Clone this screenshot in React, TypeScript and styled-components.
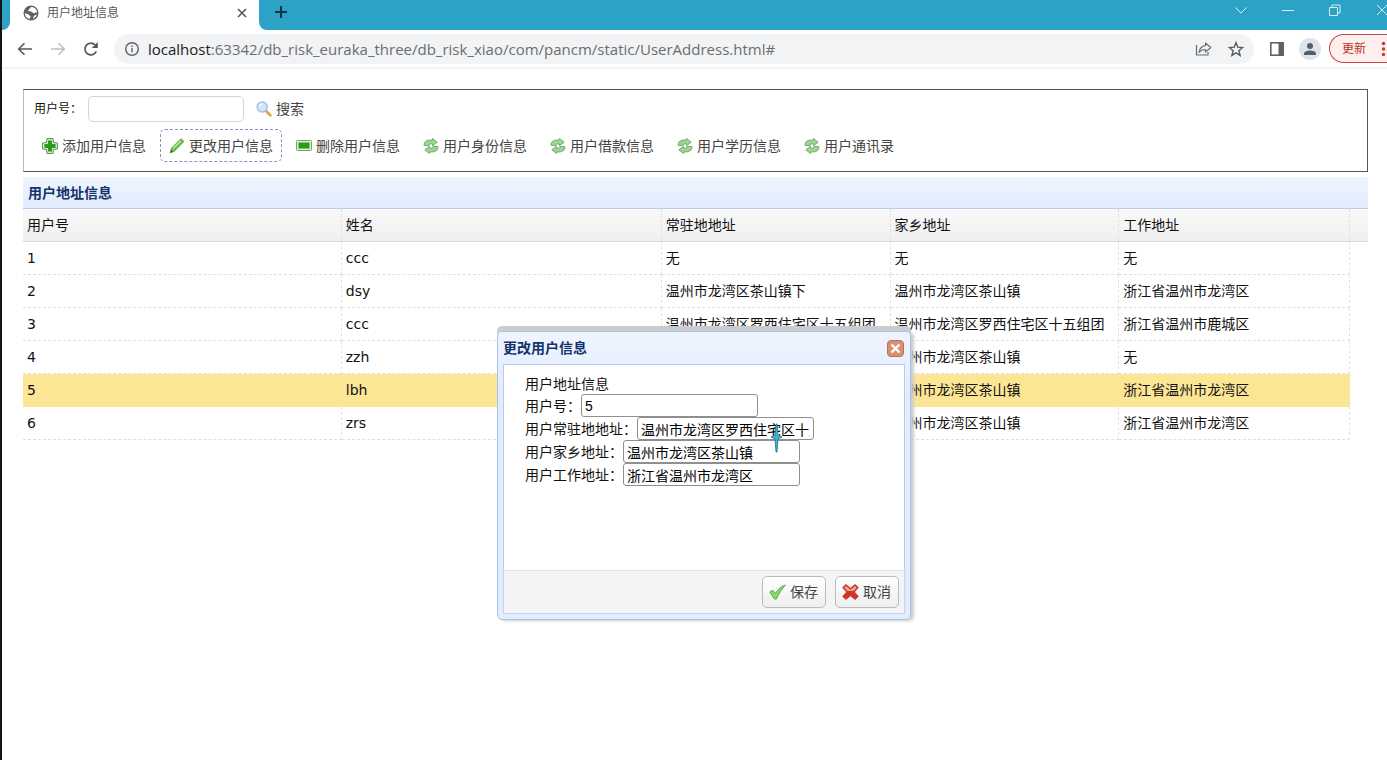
import React, { useState } from "react";
import styled, { createGlobalStyle } from "styled-components";

const CJK = '"Noto Sans CJK SC", sans-serif';
const UI = `"DejaVu Sans", ${CJK}`;
const CHROME = `"Open Sans", ${CJK}`;
const ARIAL = `"Liberation Sans", ${CJK}`;

const GlobalStyle = createGlobalStyle`
  * { box-sizing: border-box; }
  html, body { margin: 0; background: #fff; }
  body { overflow: hidden; font-family: ${UI}; font-size: 14px; line-height: 18px; color: #111; }
  button, input { font: inherit; margin: 0; }
  svg { display: block; flex: none; }
`;

const Shell = styled.div`
  min-height: 100vh;
  overflow: hidden;
  border-left: 2px solid #10151c;
`;

/* ---- browser frame ---- */

const TitleBar = styled.header`
  display: flex;
  height: 30px;
  padding-left: 8px;
  background: #2ca2c6;
`;

const Tab = styled.div`
  display: flex;
  align-items: center;
  width: 249px;
  height: 30px;
  padding: 0 9px 4px 13px;
  gap: 8px;
  background: #fff;
  font-family: ${CHROME};
  font-size: 12px;
  color: #55595e;
  box-shadow: -8px 8px 0 #fff, 8px 8px 0 #fff;
`;

const TabEdge = styled.div<{ $side: "left" | "right" }>`
  width: 8px;
  margin-left: ${(p) => (p.$side === "left" ? "-8px" : "0")};
  background: #2ca2c6;
  z-index: 1;
  border-radius: ${(p) => (p.$side === "left" ? "0 0 8px 0" : "0 0 0 8px")};
`;

const TabTitle = styled.span`
  flex: 1;
`;

const IconButton = styled.button<{ $w?: number }>`
  display: flex;
  align-items: center;
  justify-content: center;
  flex: none;
  width: ${(p) => p.$w ?? 16}px;
  height: 24px;
  padding: 0;
  border: 0;
  background: none;
  color: inherit;
`;

const NewTab = styled(IconButton)`
  margin-left: 6px;
  color: #10343f;
`;

const Caption = styled.div`
  display: flex;
  height: 20px;
  margin-left: auto;
  margin-right: -3px;
  gap: 31px;
  align-items: center;
  color: #d6eff7;
`;

const NavBar = styled.nav`
  position: relative;
  display: flex;
  align-items: center;
  height: 39px;
  padding-left: 15px;
  background: #fff;
  border-bottom: 2px solid #f3f4f5;
  color: #5a5e63;
`;

const NavButtons = styled.div`
  display: flex;
  gap: 17px;
  margin-right: 15px;
`;

const AddressBar = styled.div`
  display: flex;
  flex: 1;
  align-items: center;
  height: 30px;
  padding: 0 2px 0 10px;
  gap: 8px;
  border-radius: 15px;
  background: #f1f3f4;
  font-family: ${CHROME};
  font-size: 15px;
  color: #6a6e73;
`;

const Url = styled.span`
  flex: 1;
  white-space: nowrap;
  b {
    font-weight: 400;
    color: #202124;
  }
`;

const Actions = styled.div`
  display: flex;
  align-items: center;
  gap: 14px;
  margin-left: 15px;
`;

const Avatar = styled(IconButton)`
  width: 22px;
  height: 22px;
  border-radius: 50%;
  background: #dfe3ea;
  color: #545d6e;
`;

const Update = styled.button`
  display: flex;
  align-items: center;
  height: 29px;
  width: 58px;
  margin-left: 8px;
  padding: 0 0 0 12px;
  gap: 15px;
  border: 1px solid #c5483f;
  border-right: 0;
  border-radius: 15px 0 0 15px;
  background: #fcefee;
  font-family: ${CHROME};
  font-size: 12px;
  white-space: nowrap;
  color: #b8342b;
`;

/* ---- page ---- */

const Page = styled.main`
  padding: 20px 19px 0 21px;
`;

const ToolPanel = styled.section`
  display: flex;
  flex-direction: column;
  height: 83px;
  padding: 2px 9px 0;
  gap: 4px;
  border: 1px solid #555;
  border-left-color: #bbb;
  margin-bottom: 5px;
`;

const ToolRow = styled.div`
  display: flex;
  align-items: center;
  gap: 5px;
`;

const SearchLabel = styled.label`
  width: 50px;
  padding-left: 1px;
  font-size: 12px;
`;

const SearchInput = styled.input`
  width: 156px;
  height: 26px;
  padding: 0 4px;
  border: 1px solid #c9d6e8;
  border-radius: 5px;
  background: #fff;
  outline: none;
`;

const LinkButton = styled.button<{ $focused?: boolean }>`
  display: flex;
  align-items: center;
  gap: 4px;
  height: 33px;
  padding: 0 8px;
  border: 1px ${(p) => (p.$focused ? "dashed #8a8fc4" : "solid transparent")};
  border-radius: 5px;
  background: none;
  white-space: nowrap;
  color: #444;
`;

const SearchButton = styled(LinkButton)`
  padding: 0 6px;
`;

const GridTitle = styled.h2`
  height: 32px;
  margin: 0;
  padding: 0 5px;
  border-bottom: 1px solid #bccbe6;
  background: linear-gradient(#eff5ff, #e2ecff);
  font-size: 14px;
  line-height: 32px;
  color: #14336b;
`;

const Grid = styled.table`
  width: 100%;
  table-layout: fixed;
  border-collapse: separate;
  border-spacing: 0;
`;

const HeadRow = styled.tr`
  background: linear-gradient(#f9f9f9, #efefef);
`;

const Th = styled.th`
  height: 33px;
  padding: 0 4px;
  border-right: 1px dashed #e0e0e0;
  border-bottom: 1px solid #dcdcdc;
  font-weight: 400;
  text-align: left;
  white-space: nowrap;
  &:last-child {
    border-right: 0;
  }
`;

const Td = styled.td<{ $selected: boolean }>`
  height: 33px;
  padding: 0 4px;
  border-right: 1px dashed #e4e4e4;
  border-bottom: 1px dashed #e0e0e0;
  background: ${(p) => (p.$selected ? "#fde596" : "transparent")};
  ${(p) => p.$selected && "border-color: #fde596;"}
  white-space: nowrap;
`;

/* ---- dialog ---- */

const Dialog = styled.section`
  position: absolute;
  top: 331px;
  left: 497px;
  width: 414px;
  padding: 0 5px 5px;
  border: 1px solid #a9c1ea;
  border-radius: 5px;
  background: linear-gradient(#eff5ff, #e2ecff 20%);
  box-shadow: 0 -5px 0 #cbcccb, 3px 1px 3px #ccc;
`;

const DialogHead = styled.header`
  display: flex;
  align-items: center;
  justify-content: space-between;
  height: 32px;
  padding-right: 1px;
`;

const DialogTitle = styled.h3`
  margin: 0;
  font-size: 14px;
  color: #14336b;
`;

const CloseButton = styled.button`
  display: flex;
  align-items: center;
  justify-content: center;
  width: 17px;
  height: 17px;
  padding: 0;
  border: 1px solid #b9705a;
  border-radius: 4px;
  background: #d9906f;
`;

const DialogBody = styled.form`
  height: 206px;
  padding: 9px 21px;
  border: 1px solid #b9cbec;
  border-bottom: 0;
  background: #fff;
`;

const FormTitle = styled.div`
  height: 20px;
  line-height: 20px;
`;

const Field = styled.div`
  display: flex;
  align-items: center;
  height: 23px;
`;

const TextInput = styled.input`
  width: 177px;
  height: 23px;
  padding: 0 3px;
  border: 1px solid #8f8f8f;
  border-radius: 3px;
  background: #fff;
  font-family: ${ARIAL};
`;

const DialogFoot = styled.footer`
  display: flex;
  justify-content: flex-end;
  align-items: center;
  height: 44px;
  gap: 9px;
  padding: 0 5px;
  border: 1px solid #c5d3ec;
  border-top-color: #e3e3e3;
  background: #f4f4f4;
`;

const ActionButton = styled.button`
  display: flex;
  align-items: center;
  height: 32px;
  padding: 0 7px 0 6px;
  gap: 4px;
  border: 1px solid #bbb;
  border-radius: 5px;
  background: linear-gradient(#fff, #eee);
  color: #444;
`;

const Pointer = styled.svg`
  position: absolute;
  left: 770px;
  top: 423px;
  pointer-events: none;
`;

/* ---- icons ---- */

const GlobeIcon = () => (
  <svg width="16" height="16" viewBox="0 0 16 16">
    <circle cx="8" cy="8" r="7.5" fill="#5f6368" />
    <path d="M1.8 8.2 5 9.2c1.3.3 1.1 1.4 2 1.6.9.3.6 1.5.1 2L6.6 14C3.800 13.500 1.800 11 1.800 8.200Z M8.300 2 6.400 3.700c-.5.6 0 1-.9 1.400-.7.3-.3 1.200.4 1.200h1.500c1 0 1.200 1.100 2.200 1.100.8 0 1 .8 1.700.8.9 0 1.200-.4 1.600-.9l1.300.2C13.700 4.300 11.500 2 8.300 2Z M13.900 9.500c-.8 2-1.900 3.400-3.600 4.200l.2-1.800c.2-1 .9-1.400 1.600-1.600Z" fill="#fff" />
  </svg>
);

const BackIcon = ({ flip = false }: { flip?: boolean }) => (
  <svg width="16" height="16" viewBox="0 0 16 16" fill="none" stroke={flip ? "#bdc0c3" : "#55595e"} strokeWidth="1.6">
    {flip ? <path d="M1 8h13M8.500 2.200 14.300 8l-5.800 5.800" /> : <path d="M15 8H2M7.500 2.200 1.700 8l5.800 5.800" />}
  </svg>
);

const ReloadIcon = () => (
  <svg width="16" height="16" viewBox="0 0 16 16" fill="none">
    <path d="M13.300 10.300A5.900 5.900 0 1 1 12.300 4" stroke="#55595e" strokeWidth="1.7" />
    <path d="M14.800 1v6H8.800Z" fill="#55595e" />
  </svg>
);

const InfoIcon = () => (
  <svg width="16" height="16" viewBox="0 0 16 16" fill="none" stroke="#5f6368" strokeWidth="1.4">
    <circle cx="8" cy="8" r="6.300" />
    <path d="M8 7v4.200M8 4.500v1.500" />
  </svg>
);

const ShareIcon = () => (
  <svg width="17" height="16" viewBox="0 0 17 16" fill="none" stroke="#6a6e73" strokeWidth="1.200" strokeLinejoin="round">
    <path d="M1.500 4v10h11.500v-3" />
    <path d="M10.500 2 15.800 6.500 10.500 11V8.500C7.500 8.500 5.500 9.500 4 11.500 4.500 7.500 7 5 10.500 4.600Z" />
  </svg>
);

const StarIcon = () => (
  <svg width="16" height="16" viewBox="0 0 16 16" fill="none" stroke="#55595e" strokeWidth="1.400">
    <path d="m8 1.700 1.800 4.500 4.800.4-3.700 3.100 1.200 4.700L8 11.800l-4.100 2.600 1.200-4.700L1.400 6.600l4.800-.4Z" />
  </svg>
);

const PanelIcon = () => (
  <svg width="16" height="16" viewBox="0 0 16 16">
    <rect x="1.800" y="1.800" width="12.400" height="12.400" fill="#fff" stroke="#5f6368" strokeWidth="1.600" />
    <rect x="9.500" y="1" width="5.500" height="14" fill="#5f6368" />
  </svg>
);

const PersonIcon = () => (
  <svg width="14" height="14" viewBox="0 0 14 14" fill="currentColor">
    <circle cx="7" cy="4" r="3" />
    <path d="M1 13v-1.500C1 9.500 4.500 8.400 7 8.400s6 1.100 6 3.100V13Z" />
  </svg>
);

const DotsIcon = () => (
  <svg width="5" height="16" viewBox="0 0 5 16" fill="#c0392f">
    <circle cx="2.500" cy="2.500" r="1.700" />
    <circle cx="2.500" cy="8" r="1.700" />
    <circle cx="2.500" cy="13.500" r="1.700" />
  </svg>
);

const Lines = ({ d, size = 16, width = 1 }: { d: string; size?: number; width?: number }) => (
  <svg width={size} height={size} viewBox="0 0 16 16" fill="none" stroke="currentColor" strokeWidth={width}>
    <path d={d} />
  </svg>
);

const SearchIcon = () => (
  <svg width="16" height="16" viewBox="0 0 16 16">
    <path d="m10 10 4.300 4.300" stroke="#e2a256" strokeWidth="2.800" strokeLinecap="round" />
    <circle cx="6.200" cy="6" r="5" fill="#cfe5fb" stroke="#a3bfe6" strokeWidth="1.400" />
    <path d="M3.400 5.600A3 3 0 0 1 6.800 3" stroke="#fff" strokeWidth="1.200" fill="none" />
  </svg>
);

const AddIcon = () => (
  <svg width="16" height="16" viewBox="0 0 16 16">
    <path d="M5 .5h6L11.600 4.400 15.500 5v6l-3.900.6L11 15.500H5l-.6-3.900L.5 11V5l3.900-.6Z" fill="#cfe8ca" stroke="#5d9a57" strokeLinejoin="round" />
    <path d="M6 2.500h4V6h3.500v4H10v3.500H6V10H2.500V6H6Z" fill="#2d9a1c" />
  </svg>
);

const EditIcon = () => (
  <svg width="16" height="16" viewBox="0 0 16 16">
    <path d="m1.500 14.500 1-4.300L11.200 1.500c1.200-1 3.900 1 3 2.700L5.500 13Z" fill="#6fc24d" stroke="#4c9a36" strokeWidth=".9" />
    <path d="M4.200 10.300 12 2.700" stroke="#b9ea9f" strokeWidth="1.400" />
    <path d="m1.200 14.900.8-3 2.200 2.100Z" fill="#2c5c1e" />
  </svg>
);

const RemoveIcon = () => (
  <svg width="16" height="16" viewBox="0 0 16 16">
    <rect x=".5" y="2.500" width="15" height="10" rx="1" fill="#d9efd4" stroke="#6fae68" />
    <rect x="2.500" y="4.500" width="11" height="6" fill="#2d9a1c" />
  </svg>
);

const ReloadGreenIcon = () => (
  <svg width="16" height="16" viewBox="0 0 16 16" fill="#9bd68e" stroke="#5f9f60" strokeWidth=".8" strokeLinejoin="round">
    <path d="M1.200 7.500C.4 3.500 4 1.600 9.500 2V.4L14.200 4.200 9.500 7.800V6C7.400 5.700 6.200 6 6 7.500Z" />
    <path d="M14.800 8.500c.8 4-2.800 5.900-8.300 5.500v1.600L1.800 11.800 6.500 8.200V10c2.100.3 3.300 0 3.500-1.500Z" />
  </svg>
);

const OkIcon = () => (
  <svg width="17" height="16" viewBox="0 0 17 16">
    <path d="M.8 8 3.800 6.300l2.700 3.200C9 5.500 11.800 2.600 16.300 1 12.800 5 9.800 9.500 7.300 15H5.600Z" fill="#8bdc6a" stroke="#57a345" strokeLinejoin="round" />
  </svg>
);

const CancelIcon = () => (
  <svg width="17" height="16" viewBox="0 0 17 16">
    <path d="M.7 3.600 3.900.6 8.500 4.200 13.100.6l3.200 3L12.400 8l3.900 4.400-3.200 3-4.600-3.600-4.600 3.600-3.200-3L4.600 8Z" fill="#dc2f22" stroke="#b5423b" strokeLinejoin="round" />
    <path d="M2.300 3.700 4 2.100l4.500 3.700L13 2.100l1.700 1.600L11.500 7h-6Z" fill="#f3a49c" />
  </svg>
);

/* ---- data ---- */

const tools = [
  { text: "添加用户信息", Icon: AddIcon },
  { text: "更改用户信息", Icon: EditIcon, focused: true },
  { text: "删除用户信息", Icon: RemoveIcon },
  { text: "用户身份信息", Icon: ReloadGreenIcon },
  { text: "用户借款信息", Icon: ReloadGreenIcon },
  { text: "用户学历信息", Icon: ReloadGreenIcon },
  { text: "用户通讯录", Icon: ReloadGreenIcon },
];

const columns = ["用户号", "姓名", "常驻地地址", "家乡地址", "工作地址"];

const rows = [
  ["1", "ccc", "无", "无", "无"],
  ["2", "dsy", "温州市龙湾区茶山镇下", "温州市龙湾区茶山镇", "浙江省温州市龙湾区"],
  ["3", "ccc", "温州市龙湾区罗西住宅区十五组团", "温州市龙湾区罗西住宅区十五组团", "浙江省温州市鹿城区"],
  ["4", "zzh", "温州市龙湾区茶山镇", "温州市龙湾区茶山镇", "无"],
  ["5", "lbh", "温州市龙湾区罗西住宅区十五组团", "温州市龙湾区茶山镇", "浙江省温州市龙湾区"],
  ["6", "zrs", "温州市龙湾区茶山镇", "温州市龙湾区茶山镇", "浙江省温州市龙湾区"],
];

const fields = [
  { id: "uid", label: "用户号：", value: "5" },
  { id: "resident", label: "用户常驻地地址：", value: "温州市龙湾区罗西住宅区十五组团" },
  { id: "hometown", label: "用户家乡地址：", value: "温州市龙湾区茶山镇" },
  { id: "work", label: "用户工作地址：", value: "浙江省温州市龙湾区" },
];

export default function App() {
  const [selected, setSelected] = useState("5");

  return (
    <Shell>
      <GlobalStyle />
      <TitleBar>
        <TabEdge $side="left" />
        <Tab>
          <GlobeIcon />
          <TabTitle>用户地址信息</TabTitle>
          <IconButton aria-label="关闭标签页">
            <Lines d="m4 4 8 8M12 4l-8 8" width={1.6} />
          </IconButton>
        </Tab>
        <TabEdge $side="right" />
        <NewTab aria-label="新标签页">
          <Lines d="M8 2v12M2 8h12" width={2} />
        </NewTab>
        <Caption>
          <IconButton aria-label="搜索标签页"><Lines d="m2.500 5.500 5.500 5.500 5.500-5.500" /></IconButton>
          <IconButton aria-label="最小化"><Lines d="M2 8.500h12" /></IconButton>
          <IconButton aria-label="还原"><Lines d="M2.500 5.500h8v8h-8ZM5 5V3h8v8h-2" /></IconButton>
          <IconButton aria-label="关闭"><Lines d="m3 3 10 10M13 3 3 13" /></IconButton>
        </Caption>
      </TitleBar>

      <NavBar>
        <NavButtons>
          <IconButton aria-label="后退"><BackIcon /></IconButton>
          <IconButton aria-label="前进"><BackIcon flip /></IconButton>
          <IconButton aria-label="重新加载"><ReloadIcon /></IconButton>
        </NavButtons>
        <AddressBar>
          <InfoIcon />
          <Url>
            <b>localhost</b>:63342/db_risk_euraka_three/db_risk_xiao/com/pancm/static/UserAddress.html#
          </Url>
          <IconButton aria-label="分享" $w={17}><ShareIcon /></IconButton>
          <IconButton aria-label="收藏" $w={32}><StarIcon /></IconButton>
        </AddressBar>
        <Actions>
          <IconButton aria-label="侧边栏"><PanelIcon /></IconButton>
          <Avatar aria-label="用户"><PersonIcon /></Avatar>
        </Actions>
        <Update>
          更新
          <DotsIcon />
        </Update>
      </NavBar>

      <Page>
        <ToolPanel>
          <ToolRow>
            <SearchLabel htmlFor="search">用户号：</SearchLabel>
            <SearchInput id="search" />
            <SearchButton>
              <SearchIcon />
              搜索
            </SearchButton>
          </ToolRow>
          <ToolRow>
            {tools.map(({ text, Icon, focused }) => (
              <LinkButton key={text} $focused={focused}>
                <Icon />
                {text}
              </LinkButton>
            ))}
          </ToolRow>
        </ToolPanel>

        <GridTitle>用户地址信息</GridTitle>
        <Grid>
          <colgroup>
            <col width="23.7%" />
            <col width="23.8%" />
            <col width="17%" />
            <col width="17%" />
            <col />
            <col width="18" />
          </colgroup>
          <thead>
            <HeadRow>
              {columns.map((c) => (
                <Th key={c} scope="col">{c}</Th>
              ))}
              <Th as="td" />
            </HeadRow>
          </thead>
          <tbody>
            {rows.map((r) => (
              <tr key={r[0]} onClick={() => setSelected(r[0])}>
                {r.map((cell, i) => (
                  <Td key={i} $selected={r[0] === selected}>{cell}</Td>
                ))}
              </tr>
            ))}
          </tbody>
        </Grid>
      </Page>

      <Dialog role="dialog" aria-labelledby="dialog-title">
        <DialogHead>
          <DialogTitle id="dialog-title">更改用户信息</DialogTitle>
          <CloseButton aria-label="关闭">
            <svg width="11" height="11" viewBox="0 0 11 11" stroke="#fff" strokeWidth="2.400">
              <path d="m1.500 1.500 8 8M9.500 1.500l-8 8" />
            </svg>
          </CloseButton>
        </DialogHead>
        <DialogBody>
          <FormTitle>用户地址信息</FormTitle>
          {fields.map((f) => (
            <Field key={f.id}>
              <label htmlFor={f.id}>{f.label}</label>
              <TextInput id={f.id} defaultValue={f.value} />
            </Field>
          ))}
        </DialogBody>
        <DialogFoot>
          <ActionButton>
            <OkIcon />
            保存
          </ActionButton>
          <ActionButton>
            <CancelIcon />
            取消
          </ActionButton>
        </DialogFoot>
      </Dialog>

      <Pointer width="13" height="30" viewBox="0 0 13 30">
        <path d="M6 1h1l1 11 4 2-4 2-1 13H6L5 16l-4-2 4-2Z" fill="#3fb4cf" stroke="#1d6f86" strokeWidth=".8" />
      </Pointer>
    </Shell>
  );
}
